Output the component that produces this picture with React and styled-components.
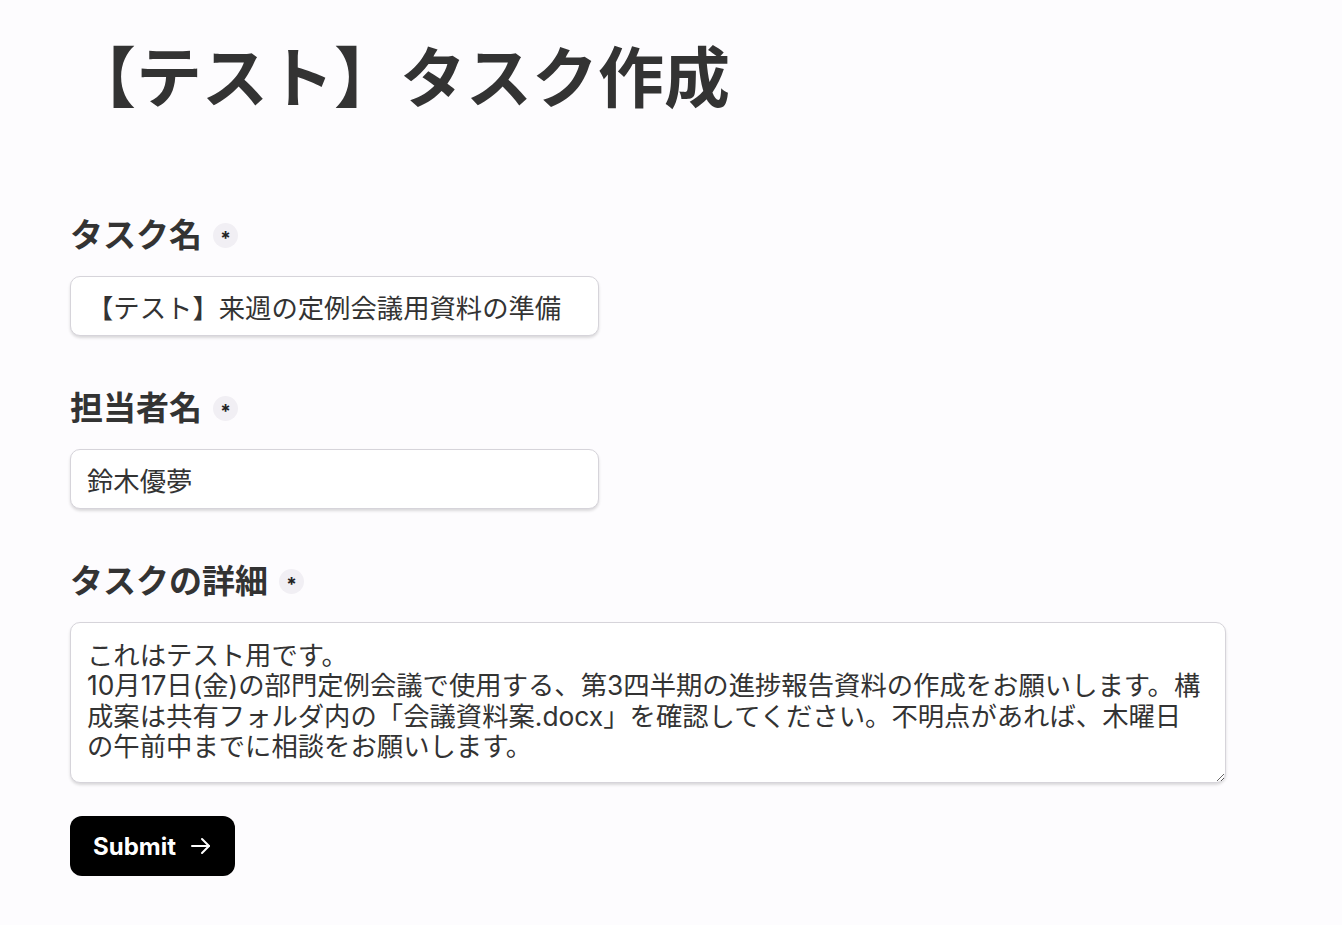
import React from "react";
import styled, { createGlobalStyle } from "styled-components";

const Global = createGlobalStyle`
  html, body { margin: 0; padding: 0; background: #fdfcfe; }
  body { font-family: Inter, "Noto Sans CJK JP", sans-serif; color: #333; }
  * { box-sizing: border-box; }
`;

const Page = styled.main`
  padding: 33px 70px 40px;
`;

const Title = styled.h1`
  margin: 0;
  font-family: "Noto Sans CJK JP", sans-serif;
  font-size: 66px;
  line-height: 80px;
  font-weight: 700;
  color: #333;
`;

const Form = styled.form`
  margin-top: 98px;
  display: flex;
  flex-direction: column;
`;

const Field = styled.div`
  display: flex;
  flex-direction: column;
  gap: 17px;
  margin-bottom: ${(p) => p.$mb}px;
`;

const Label = styled.label`
  display: flex;
  align-items: center;
  gap: 11px;
  font-family: Inter, "Noto Sans CJK JP", sans-serif;
  font-size: 33px;
  line-height: 48px;
  font-weight: 700;
  color: #333;
`;

const Required = styled.span`
  width: 25px;
  height: 25px;
  border-radius: 50%;
  background: #f1eff4;
  display: inline-flex;
  align-items: center;
  justify-content: center;
  font-family: Inter, sans-serif;
  font-size: 19px;
  font-weight: 700;
  line-height: 1;
  padding-top: 6px;
  color: #222;
`;

const Input = styled.input`
  width: 529px;
  height: 60px;
  padding: 0 16px;
  border: 1px solid #d6d4da;
  border-radius: 10px;
  background: #fff;
  box-shadow: 0 2px 3px rgba(0, 0, 0, 0.14);
  font-family: Inter, "Noto Sans CJK JP", sans-serif;
  font-size: 26.35px;
  color: #333;
  outline: none;
`;

const TextArea = styled.textarea`
  width: 1156px;
  height: 161px;
  padding: 17px 21px 17px 16px;
  border: 1px solid #d6d4da;
  border-radius: 10px;
  background: #fff;
  box-shadow: 0 2px 3px rgba(0, 0, 0, 0.14);
  font-family: Inter, "Noto Sans CJK JP", sans-serif;
  font-size: 26.35px;
  line-height: 30.4px;
  color: #333;
  outline: none;
  resize: both;
`;

const Button = styled.button`
  align-self: flex-start;
  height: 60px;
  width: 165px;
  padding: 0 0 0 23px;
  border: none;
  border-radius: 12px;
  background: #000;
  color: #fff;
  display: flex;
  align-items: center;
  gap: 13px;
  font-family: Inter, sans-serif;
  font-size: 24px;
  font-weight: 700;
  cursor: pointer;
`;

const Arrow = () => (
  <svg width="24" height="24" viewBox="0 0 24 24" fill="none" stroke="#fff" strokeWidth="2" strokeLinecap="round" strokeLinejoin="round">
    <path d="M3 12h17" />
    <path d="M13 5l7 7-7 7" />
  </svg>
);

const detail =
  "これはテスト用です。\n10月17日(金)の部門定例会議で使用する、第3四半期の進捗報告資料の作成をお願いします。構成案は共有フォルダ内の「会議資料案.docx」を確認してください。不明点があれば、木曜日の午前中までに相談をお願いします。";

export default function App() {
  return (
    <>
      <Global />
      <Page>
        <Title>【テスト】タスク作成</Title>
        <Form onSubmit={(e) => e.preventDefault()}>
          <Field $mb={48}>
            <Label>
              タスク名<Required>*</Required>
            </Label>
            <Input defaultValue="【テスト】来週の定例会議用資料の準備" />
          </Field>
          <Field $mb={48}>
            <Label>
              担当者名<Required>*</Required>
            </Label>
            <Input defaultValue="鈴木優夢" />
          </Field>
          <Field $mb={33}>
            <Label>
              タスクの詳細<Required>*</Required>
            </Label>
            <TextArea defaultValue={detail} />
          </Field>
          <Button type="submit">
            Submit
            <Arrow />
          </Button>
        </Form>
      </Page>
    </>
  );
}
